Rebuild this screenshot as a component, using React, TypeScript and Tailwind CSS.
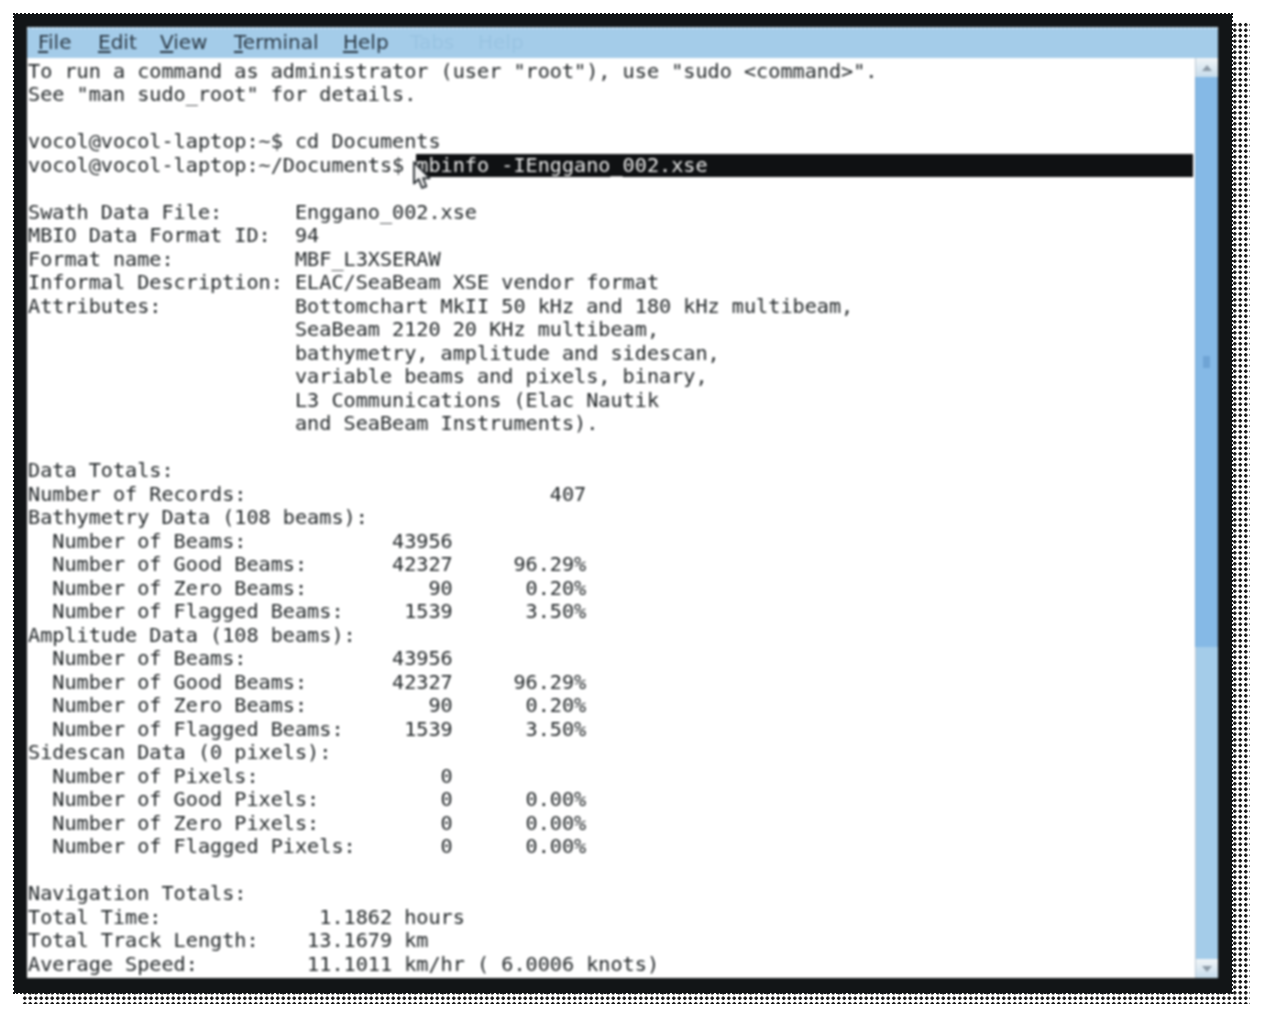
import { ReactNode } from 'react';

const before = [
  'To run a command as administrator (user "root"), use "sudo <command>".',
  'See "man sudo_root" for details.',
  '',
  'vocol@vocol-laptop:~$ cd Documents',
];

const after = [
  '',
  'Swath Data File:      Enggano_002.xse',
  'MBIO Data Format ID:  94',
  'Format name:          MBF_L3XSERAW',
  'Informal Description: ELAC/SeaBeam XSE vendor format',
  'Attributes:           Bottomchart MkII 50 kHz and 180 kHz multibeam,',
  '                      SeaBeam 2120 20 KHz multibeam,',
  '                      bathymetry, amplitude and sidescan,',
  '                      variable beams and pixels, binary,',
  '                      L3 Communications (Elac Nautik',
  '                      and SeaBeam Instruments).',
  '',
  'Data Totals:',
  'Number of Records:                         407',
  'Bathymetry Data (108 beams):',
  '  Number of Beams:            43956',
  '  Number of Good Beams:       42327     96.29%',
  '  Number of Zero Beams:          90      0.20%',
  '  Number of Flagged Beams:     1539      3.50%',
  'Amplitude Data (108 beams):',
  '  Number of Beams:            43956',
  '  Number of Good Beams:       42327     96.29%',
  '  Number of Zero Beams:          90      0.20%',
  '  Number of Flagged Beams:     1539      3.50%',
  'Sidescan Data (0 pixels):',
  '  Number of Pixels:               0',
  '  Number of Good Pixels:          0      0.00%',
  '  Number of Zero Pixels:          0      0.00%',
  '  Number of Flagged Pixels:       0      0.00%',
  '',
  'Navigation Totals:',
  'Total Time:             1.1862 hours',
  'Total Track Length:    13.1679 km',
  'Average Speed:         11.1011 km/hr ( 6.0006 knots)',
];

function Line({ children }: { children: ReactNode }) {
  return <div className="h-[23.5px] whitespace-pre">{children}</div>;
}

function MenuItem({ mark, rest }: { mark: string; rest: string }) {
  return (
    <span>
      <span className="underline underline-offset-2">{mark}</span>
      {rest}
    </span>
  );
}

function Stepper({ up }: { up?: boolean }) {
  return (
    <div className="flex h-[19px] shrink-0 items-center justify-center border-l border-[#b9c6d2] bg-gradient-to-b from-[#f1f5f7] to-[#c6dcec]">
      <svg width="12" height="8" viewBox="0 0 12 8">
        <path d={up ? 'M1 7 L6 1 L11 7 Z' : 'M1 1 L6 7 L11 1 Z'} fill="#8c9aa6" />
      </svg>
    </div>
  );
}

export default function App() {
  return (
    <div className="relative h-[1024px] w-[1264px] overflow-hidden bg-white pl-[14px] pt-[14px] font-['DejaVu_Sans_Mono',monospace]">
      {/* dotted shadow, right and bottom */}
      <div className="absolute left-[22px] top-[22px] h-[982px] w-[1228px] bg-[radial-gradient(circle,#111_1.4px,transparent_1.9px)] bg-[length:5.5px_5.5px]" />

      <div className="relative h-[979px] w-[1218px] bg-[#121517] pb-[15px] pl-[13px] pr-[14px] pt-[13px] outline-[2px] outline-offset-[-1px] outline-dotted outline-[#121517]">
        <div className="flex h-full flex-col overflow-hidden bg-white blur-[1px]">
          {/* menu bar */}
          <div className="flex h-[31px] shrink-0 items-center border-t-2 border-dotted border-white/60 bg-[#a4cce9] pb-[3px] pl-[11px] font-['DejaVu_Sans',sans-serif] text-[20px] text-[#2b3945]">
            <div className="w-[60px]"><MenuItem mark="F" rest="ile" /></div>
            <div className="w-[62px]"><MenuItem mark="E" rest="dit" /></div>
            <div className="w-[74px]"><MenuItem mark="V" rest="iew" /></div>
            <div className="w-[109px]"><MenuItem mark="T" rest="erminal" /></div>
            <div className="w-[67px]"><MenuItem mark="H" rest="elp" /></div>
            <div className="w-[68px] text-[#9ac4e2]">Tabs</div>
            <div className="text-[#9ac4e2]">Help</div>
          </div>

          <div className="flex min-h-0 flex-1">
            {/* terminal output */}
            <div className="min-w-0 flex-1 overflow-hidden bg-white pl-[1px] pr-[2px] pt-[1.5px] text-[20.17px] leading-[23.5px] text-[#1f2426]">
              {before.map((line, i) => (
                <Line key={i}>{line}</Line>
              ))}
              <div className="relative flex h-[23.5px] whitespace-pre">
                <span>vocol@vocol-laptop:~/Documents$ </span>
                <span className="flex-1 bg-[#0f1113] text-[#e8e8e8]">mbinfo -IEnggano_002.xse</span>
                <svg className="absolute left-[384px] top-[7px]" width="20" height="29" viewBox="0 0 18 27">
                  <path d="M1.5 1 L1.5 21 L6 17 L9 25 L13 23.5 L10 16 L16 16 Z" fill="#f4f4f4" stroke="#33383c" strokeWidth="1.8" strokeLinejoin="round" />
                </svg>
              </div>
              {after.map((line, i) => (
                <Line key={i}>{line}</Line>
              ))}
            </div>

            {/* scrollbar */}
            <div className="flex w-[23px] shrink-0 flex-col bg-[#a4cce9]">
              <Stepper up />
              <div className="flex h-[570px] shrink-0 items-center justify-center border-x border-[#7aa8d2] bg-[#85b9e6]">
                <div className="h-[12px] w-[7px] bg-[#6fa4d5]" />
              </div>
              <div className="flex-1 border-l border-[#b9c6d2]" />
              <Stepper />
            </div>
          </div>
        </div>
      </div>
    </div>
  );
}
